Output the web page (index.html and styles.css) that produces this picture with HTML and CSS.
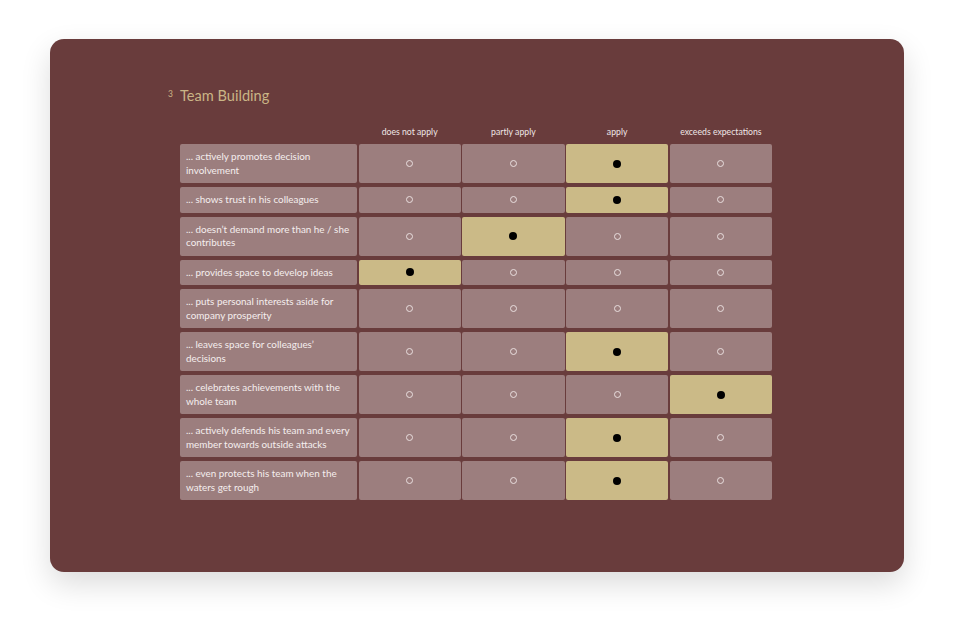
FILE: index.html
```html
<!DOCTYPE html>
<html lang="en">
<head>
<meta charset="utf-8">
<title>Team Building</title>
<link rel="stylesheet" href="styles.css">
</head>
<body>
<div class="card">
  <h2 class="title"><sup class="num">3</sup><span>Team Building</span></h2>
  <div class="grid">
    <div class="head"></div>
    <div class="head">does not apply</div>
    <div class="head">partly apply</div>
    <div class="head">apply</div>
    <div class="head">exceeds expectations</div>

    <div class="label">... actively promotes decision involvement</div>
    <div class="cell"><i class="o"></i></div><div class="cell"><i class="o"></i></div><div class="cell sel"><i class="dot"></i></div><div class="cell"><i class="o"></i></div>

    <div class="label">... shows trust in his colleagues</div>
    <div class="cell"><i class="o"></i></div><div class="cell"><i class="o"></i></div><div class="cell sel"><i class="dot"></i></div><div class="cell"><i class="o"></i></div>

    <div class="label">... doesn’t demand more than he / she contributes</div>
    <div class="cell"><i class="o"></i></div><div class="cell sel"><i class="dot"></i></div><div class="cell"><i class="o"></i></div><div class="cell"><i class="o"></i></div>

    <div class="label">... provides space to develop ideas</div>
    <div class="cell sel"><i class="dot"></i></div><div class="cell"><i class="o"></i></div><div class="cell"><i class="o"></i></div><div class="cell"><i class="o"></i></div>

    <div class="label">... puts personal interests aside for company prosperity</div>
    <div class="cell"><i class="o"></i></div><div class="cell"><i class="o"></i></div><div class="cell"><i class="o"></i></div><div class="cell"><i class="o"></i></div>

    <div class="label">... leaves space for colleagues’ decisions</div>
    <div class="cell"><i class="o"></i></div><div class="cell"><i class="o"></i></div><div class="cell sel"><i class="dot"></i></div><div class="cell"><i class="o"></i></div>

    <div class="label">... celebrates achievements with the whole team</div>
    <div class="cell"><i class="o"></i></div><div class="cell"><i class="o"></i></div><div class="cell"><i class="o"></i></div><div class="cell sel"><i class="dot"></i></div>

    <div class="label">... actively defends his team and every member towards outside attacks</div>
    <div class="cell"><i class="o"></i></div><div class="cell"><i class="o"></i></div><div class="cell sel"><i class="dot"></i></div><div class="cell"><i class="o"></i></div>

    <div class="label">... even protects his team when the waters get rough</div>
    <div class="cell"><i class="o"></i></div><div class="cell"><i class="o"></i></div><div class="cell sel"><i class="dot"></i></div><div class="cell"><i class="o"></i></div>
  </div>
</div>
</body>
</html>
```
FILE: styles.css
```css
html, body {
  margin: 0;
  padding: 0;
  background: #ffffff;
}
body {
  min-height: 633px;
  box-sizing: border-box;
  padding: 39px 50px 61px 50px;
  font-family: Lato, "Open Sans", sans-serif;
}
.card {
  width: 854px;
  height: 533px;
  box-sizing: border-box;
  background: #693c3c;
  border-radius: 14px;
  box-shadow: 0 12px 30px rgba(0, 0, 0, 0.14);
  padding: 48px 0 0 118px;
}
.title {
  margin: 0;
  display: flex;
  align-items: flex-start;
  font-weight: 400;
  font-size: 14.6px;
  line-height: 18px;
  color: #c9b586;
}
.num {
  font-size: 8.5px;
  line-height: 10px;
  margin-top: 2px;
  width: 12px;
  vertical-align: top;
}
.grid {
  margin: 21px 0 0 12px;
  width: 592px;
  display: grid;
  grid-template-columns: 177px repeat(4, 1fr);
  column-gap: 1.5px;
  row-gap: 4px;
}
.head {
  font-size: 8.7px;
  line-height: 10px;
  color: #efe6e6;
  text-align: center;
  padding: 1px 0 3px;
}
.label {
  background: #9c7e7e;
  border-radius: 2px;
  color: #f5eeee;
  font-size: 9.9px;
  line-height: 13.5px;
  padding: 6px 6px;
}
.cell {
  background: #9c7e7e;
  border-radius: 2px;
  display: flex;
  align-items: center;
  justify-content: center;
}
.cell.sel {
  background: #cbba87;
}
.o {
  width: 7px;
  height: 7px;
  box-sizing: border-box;
  border: 1px solid #e9dede;
  border-radius: 50%;
}
.dot {
  width: 8px;
  height: 8px;
  border-radius: 50%;
  background: #000000;
}
```
